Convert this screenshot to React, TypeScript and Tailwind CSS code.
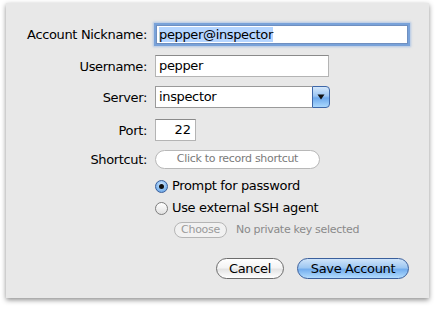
import React from "react";

const font = { fontFamily: '"DejaVu Sans", "Liberation Sans", sans-serif' };

function Label({ children }: { children: React.ReactNode }) {
  return (
    <div className="w-[141px] shrink-0 text-right text-[13px] leading-none tracking-[-0.35px] text-black">
      {children}
    </div>
  );
}

export default function App() {
  return (
    <div className="w-[436px] h-[309px] bg-white pt-[3px] pl-[6px]" style={font}>
      <div className="w-[423px] h-[295px] bg-[#e8e8e8] shadow-[0_2px_5px_rgba(0,0,0,0.45)] flex flex-col">
        {/* Nickname */}
        <div className="mt-[20px] h-[22px] flex items-center gap-[8px]">
          <Label>Account Nickname:</Label>
          <div className="ml-[1px] w-[252px] h-[19px] bg-white border border-[#6f8fc0] shadow-[0_0_0_2px_rgba(110,155,215,0.85),0_0_2px_3px_rgba(120,165,225,0.5)] flex items-center pl-[2px]">
            <span className="bg-[#b5d5ff] text-[13px] leading-[15px] tracking-[-0.35px] text-black">pepper@inspector</span>
          </div>
        </div>
        {/* Username */}
        <div className="mt-[10px] h-[22px] flex items-center gap-[8px]">
          <Label>Username:</Label>
          <div className="w-[174px] h-[22px] bg-white border border-[#b4b4b4] border-t-[#8a8a8a] flex items-center pl-[3px] text-[13px] tracking-[-0.35px] text-black">
            pepper
          </div>
        </div>
        {/* Server */}
        <div className="mt-[9px] h-[22px] flex items-center gap-[8px]">
          <Label>Server:</Label>
          <div className="w-[175px] h-[22px] flex">
            <div className="flex-1 bg-white border border-[#9a9a9a] border-r-0 flex items-center pl-[3px] text-[13px] tracking-[-0.35px] text-black">
              inspector
            </div>
            <div className="w-[18px] h-[22px] rounded-r-[4px] border border-[#3e67a8] bg-[linear-gradient(to_bottom,#d4e7fb_0%,#9cc6f3_45%,#6ea9ec_55%,#aad8fd_100%)] flex items-center justify-center">
              <svg width="8" height="6" viewBox="0 0 8 6"><path d="M0.5 0.5 H7.5 L4 5.5 Z" fill="#111" /></svg>
            </div>
          </div>
        </div>
        {/* Port */}
        <div className="mt-[11px] h-[22px] flex items-center gap-[8px]">
          <Label>Port:</Label>
          <div className="w-[41px] h-[22px] bg-white border border-[#b4b4b4] border-t-[#8a8a8a] flex items-center justify-end pr-[4px] text-[13px] text-black">
            22
          </div>
        </div>
        {/* Shortcut */}
        <div className="mt-[9px] h-[19px] flex items-center gap-[8px]">
          <Label>Shortcut:</Label>
          <div className="w-[165px] h-[19px] rounded-full bg-white border border-[#b8b8b8] flex items-center justify-center text-[11px] tracking-[-0.3px] text-[#7a7a7a]">
            Click to record shortcut
          </div>
        </div>
        {/* Radio 1 */}
        <div className="mt-[8px] h-[18px] flex items-center pl-[149px]">
          <div className="w-[13px] h-[13px] rounded-full border border-[#3a5f9c] bg-[radial-gradient(circle_at_50%_35%,#d8ebff_0%,#8fc0f2_50%,#5c9be0_100%)] flex items-center justify-center">
            <div className="w-[5px] h-[5px] rounded-full bg-[#111]" />
          </div>
          <span className="ml-[4px] text-[13px] tracking-[-0.35px] text-black">Prompt for password</span>
        </div>
        {/* Radio 2 */}
        <div className="mt-[4px] h-[18px] flex items-center pl-[149px]">
          <div className="w-[13px] h-[13px] rounded-full border border-[#7d7d7d] bg-[linear-gradient(to_bottom,#ffffff_0%,#f0f0f0_50%,#e0e0e0_100%)]" />
          <span className="ml-[4px] text-[13px] tracking-[-0.35px] text-black">Use external SSH agent</span>
        </div>
        {/* Choose */}
        <div className="mt-[5px] h-[16px] flex items-center pl-[168px]">
          <div className="w-[53px] h-[16px] rounded-full border border-[#b5b5b5] bg-[#f1f1f1] flex items-center justify-center text-[11px] tracking-[-0.3px] text-[#9a9a9a]">
            Choose
          </div>
          <span className="ml-[9px] text-[11px] tracking-[-0.3px] text-[#8a8a8a]">No private key selected</span>
        </div>
        {/* Buttons */}
        <div className="mt-[20px] h-[21px] flex items-center justify-end pr-[20px] gap-[13px]">
          <div className="w-[68px] h-[21px] rounded-full border border-[#6c6c6c] bg-[linear-gradient(to_bottom,#ffffff_0%,#f4f4f4_45%,#e4e4e4_55%,#ffffff_100%)] flex items-center justify-center text-[13px] tracking-[-0.35px] text-black">
            Cancel
          </div>
          <div className="w-[112px] h-[21px] rounded-full border border-[#3a5f9c] bg-[linear-gradient(to_bottom,#cfe4fa_0%,#9fc8f2_45%,#74aeee_55%,#b2dcfe_100%)] flex items-center justify-center text-[13px] tracking-[-0.35px] text-black">
            Save Account
          </div>
        </div>
      </div>
    </div>
  );
}
